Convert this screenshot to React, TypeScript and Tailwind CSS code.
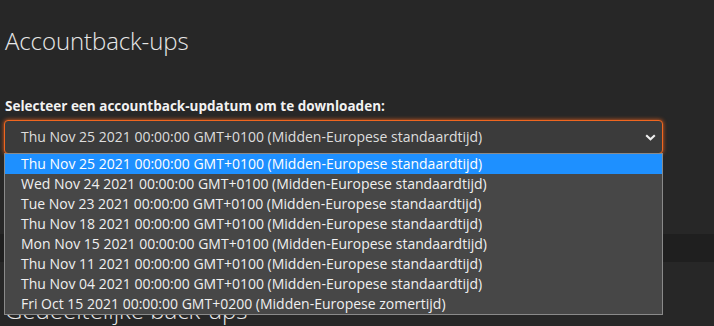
const dates = [
  'Thu Nov 25 2021 00:00:00 GMT+0100 (Midden-Europese standaardtijd)',
  'Wed Nov 24 2021 00:00:00 GMT+0100 (Midden-Europese standaardtijd)',
  'Tue Nov 23 2021 00:00:00 GMT+0100 (Midden-Europese standaardtijd)',
  'Thu Nov 18 2021 00:00:00 GMT+0100 (Midden-Europese standaardtijd)',
  'Mon Nov 15 2021 00:00:00 GMT+0100 (Midden-Europese standaardtijd)',
  'Thu Nov 11 2021 00:00:00 GMT+0100 (Midden-Europese standaardtijd)',
  'Thu Nov 04 2021 00:00:00 GMT+0100 (Midden-Europese standaardtijd)',
  'Fri Oct 15 2021 00:00:00 GMT+0200 (Midden-Europese zomertijd)',
];

export default function App() {
  const selected = 0;

  return (
    <div className="h-[326px] w-[714px] overflow-hidden bg-[#272727] text-[#e6e6e6] [font-family:'Open_Sans',sans-serif]">
      <div className="pl-[4px] pt-[23px]">
        <h1 className="pl-px text-[24px] font-light leading-[36px] tracking-[-0.1px] text-[#e8e8e8]">Accountback-ups</h1>

        <div className="relative mt-[38px] w-[659px]">
          <label className="block pl-px text-[13.5px] font-bold leading-[18px] text-[#f2f2f2]">
            Selecteer een accountback-updatum om te downloaden:
          </label>
          <div className="mt-[5px] flex h-[34px] items-center justify-between rounded-[4px] border border-[#f0661f] bg-[#3b3b3b] pr-[6px] pl-[16px] shadow-[0_0_4px_#e8601c]">
            <span className="text-[14px] leading-[18px] text-[#dedede]">{dates[selected]}</span>
            <svg width="11" height="7" viewBox="0 0 11 7" className="mt-px">
              <path d="M1.2 1.3 5.5 5.3 9.8 1.3" fill="none" stroke="#f0f0f0" strokeWidth="2.1" />
            </svg>
          </div>

          <ul className="absolute top-[56px] left-0 z-10 w-[659px] border border-[#8a8a8a] bg-[#474747]">
            {dates.map((d, i) => (
              <li
                key={d}
                className={
                  i === selected
                    ? 'h-[20px] bg-[#1e90ff] pl-[16px] text-[14px] leading-[20px] text-white'
                    : 'h-[20px] pl-[16px] text-[14px] leading-[20px] text-[#f0f0f0]'
                }
              >
                {d}
              </li>
            ))}
          </ul>
        </div>
      </div>

      <div className="mt-[80px] h-[28px] w-full bg-[#1f1f1f]" />

      <h2 className="mt-[30px] pl-[5px] text-[24px] font-light leading-[36px] text-[#e8e8e8]">Gedeeltelijke back-ups</h2>
    </div>
  );
}
